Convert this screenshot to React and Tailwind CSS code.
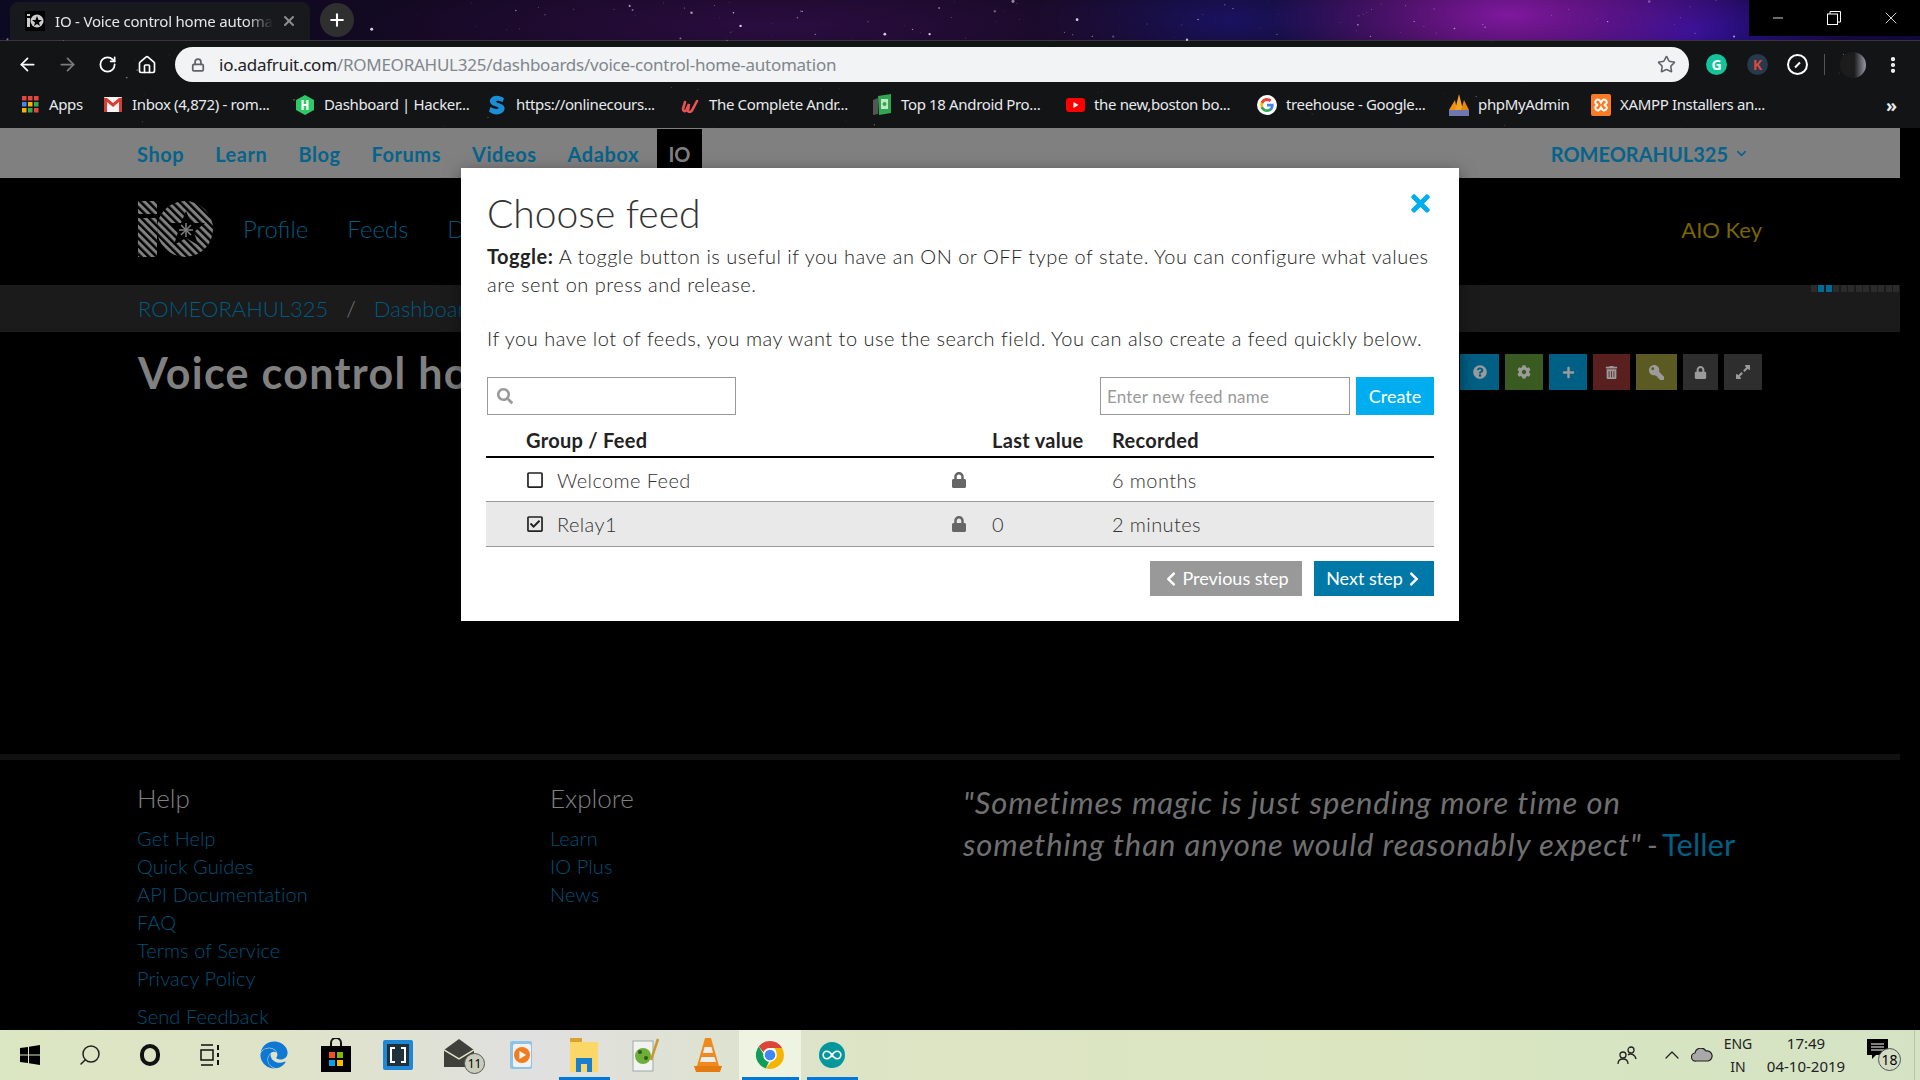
import { ArrowLeft, ArrowRight, RotateCw, Home, Star, Lock, ChevronDown, Plus, X, Minus, MoreVertical, Search, ChevronUp } from 'lucide-react';
import {
  FaTimes, FaSearch, FaRegSquare, FaRegCheckSquare, FaLock, FaChevronLeft, FaChevronRight,
  FaQuestionCircle, FaCog, FaPlus, FaTrashAlt, FaKey, FaExpandAlt, FaEdge,
} from 'react-icons/fa';

const SANS = "font-['Lato','Liberation_Sans',sans-serif]";
const UI = "font-['Noto_Sans','Liberation_Sans',sans-serif]";

// deterministic star field for the wallpaper
const makeStars = (count, w, h, seed) => {
  let s = seed;
  const rnd = () => {
    s = (s * 16807) % 2147483647;
    return s / 2147483647;
  };
  return Array.from({ length: count }, () => ({ x: rnd() * w, y: rnd() * h, r: 0.3 + rnd() * rnd() * 1.5, o: 0.2 + rnd() * 0.7 }));
};
const TOP_STARS = makeStars(120, 1750, 41, 4711);
const BAR_STARS = makeStars(90, 1920, 87, 9133);

const Stars = ({ stars, w, h, fill }) => (
  <svg className="absolute inset-0" width={w} height={h}>
    {stars.map((p, i) => (
      <circle key={i} cx={p.x} cy={p.y} r={p.r} fill={fill} opacity={p.o} />
    ))}
  </svg>
);

const IoLogo = () => (
  <svg width="75" height="56" viewBox="0 0 75 56">
    <defs>
      <pattern id="hatch" width="5.500" height="5.500" patternUnits="userSpaceOnUse" patternTransform="rotate(45)">
        <rect width="5.500" height="3" fill="#808080" />
      </pattern>
    </defs>
    <rect x="0" y="0" width="19" height="13" fill="url(#hatch)" />
    <rect x="0" y="17" width="19" height="39" fill="url(#hatch)" />
    <circle cx="47" cy="28" r="28" fill="url(#hatch)" />
    <polygon points="48,10 53,22 67,22 56,31 60,44 48,37 36,44 40,31 30,22 43,22" fill="#000" />
    <g stroke="#808080" strokeWidth="1.500">
      <line x1="48" y1="22" x2="48" y2="36" />
      <line x1="41" y1="29" x2="55" y2="29" />
      <line x1="43" y1="24" x2="53" y2="34" />
      <line x1="53" y1="24" x2="43" y2="34" />
    </g>
  </svg>
);

const Favicon = () => (
  <svg width="20" height="20" viewBox="0 0 20 20">
    <rect width="20" height="20" fill="#000" />
    <rect x="2" y="3" width="3" height="2" fill="#ccc" />
    <rect x="2" y="7" width="3" height="9" fill="#ccc" />
    <circle cx="12" cy="10" r="6.500" fill="#ccc" />
    <polygon points="12,5 13.500,9 17,9 14,11.500 15,15 12,13 9,15 10,11.500 7,9 10.500,9" fill="#000" />
  </svg>
);

const GoogleG = ({ size = 20 }) => (
  <svg width={size} height={size} viewBox="0 0 24 24">
    <circle cx="12" cy="12" r="12" fill="#fff" />
    <path d="M20 12.200c0-.6-.1-1.100-.2-1.600H12v3.100h4.500c-.2 1-.8 1.900-1.700 2.500v2h2.700c1.600-1.400 2.500-3.500 2.500-6z" fill="#4285f4" />
    <path d="M12 20.300c2.200 0 4.100-.7 5.500-2l-2.700-2c-.8.500-1.700.8-2.800.8-2.100 0-3.900-1.400-4.600-3.400H4.600v2.100c1.400 2.700 4.200 4.500 7.400 4.500z" fill="#34a853" />
    <path d="M7.400 13.700c-.3-1-.3-2.100 0-3.100V8.500H4.600c-1 1.900-1 4.400 0 6.300z" fill="#fbbc05" />
    <path d="M12 7.100c1.200 0 2.300.4 3.100 1.200l2.400-2.400C16.100 4.600 14.200 3.700 12 3.700c-3.200 0-6 1.800-7.400 4.800l2.800 2.100c.7-2 2.500-3.500 4.600-3.500z" fill="#ea4335" />
  </svg>
);

const BOOKMARKS = [
  { label: 'Apps', w: 'w-[83px]', icon: (
    <svg width="17" height="17" viewBox="0 0 17 17">
      {[0, 6, 12].map((y, r) => [0, 6, 12].map((x, c) => (
        <rect key={`${r}${c}`} x={x} y={y} width="4.500" height="4.500" fill={[['#e8453c', '#e8453c', '#e8453c'], ['#4285f4', '#f4b400', '#34a853'], ['#f4b400', '#34a853', '#e8453c']][r][c]} />
      )))}
    </svg>
  ) },
  { label: 'Inbox (4,872) - rom...', w: 'w-[192px]', icon: (
    <svg width="18" height="15" viewBox="0 0 18 15">
      <rect width="18" height="15" rx="1" fill="#f5f5f5" />
      <path d="M0 1h3l6 5 6-5h3v14h-3V5L9 10 3 5v10H0z" fill="#d93c30" />
    </svg>
  ) },
  { label: 'Dashboard | Hacker...', w: 'w-[192px]', icon: (
    <svg width="18" height="20" viewBox="0 0 18 20">
      <polygon points="9,0 18,5 18,15 9,20 0,15 0,5" fill="#2ec866" />
      <path d="M5.500 5h2.200v4h2.600V5h2.200v10h-2.200v-4H7.700v4H5.500z" fill="#fff" />
    </svg>
  ) },
  { label: 'https://onlinecours...', w: 'w-[193px]', icon: (
    <svg width="16" height="20" viewBox="0 0 16 20">
      <path d="M15 3.500C13 1.500 9.500.5 6 1 2.500 1.700.5 4 1 7c.4 2.500 3 3.500 5.500 4.300 1.700.5 3 1 3 1.800 0 1.500-4.500 1.200-8-1L0 16.500C3 19 7 20 10.500 19c3.500-1 5.500-3.500 5-6.500-.5-2.500-3-3.500-5.500-4.300-1.500-.5-3-1-2.900-1.800.2-1.200 4-.8 6.400.8z" fill="#1a8fd6" />
    </svg>
  ) },
  { label: 'The Complete Andr...', w: 'w-[192px]', icon: (
    <svg width="18" height="16" viewBox="0 0 18 16">
      <path d="M4 5 2 12c0 2 2 3 3.500 1L8 7l-1 6c0 2.500 2.500 2.500 4 .5L16 4" fill="none" stroke="#ec5252" strokeWidth="2.600" strokeLinecap="round" />
    </svg>
  ) },
  { label: 'Top 18 Android Pro...', w: 'w-[193px]', icon: (
    <svg width="20" height="22" viewBox="0 0 20 22">
      <polygon points="1,6 6,4 6,20 1,21" fill="#555" />
      <polygon points="6,2 19,0 19,19 7,21" fill="#2fa84f" />
      <rect x="9" y="5" width="7" height="10" fill="#bfe8c8" />
      <circle cx="12.500" cy="10" r="2" fill="#2fa84f" />
    </svg>
  ) },
  { label: 'the new,boston bo...', w: 'w-[192px]', icon: (
    <svg width="19" height="14" viewBox="0 0 19 14">
      <rect width="19" height="14" rx="3" fill="#f00" />
      <polygon points="7.500,4 12.500,7 7.500,10" fill="#fff" />
    </svg>
  ) },
  { label: 'treehouse - Google...', w: 'w-[192px]', icon: <GoogleG /> },
  { label: 'phpMyAdmin', w: 'w-[142px]', icon: (
    <svg width="20" height="22" viewBox="0 0 20 22">
      <polygon points="0,16 6,6 8,16" fill="#f29111" />
      <polygon points="6,16 10,0 14,16" fill="#f5a623" />
      <polygon points="12,16 15,6 20,16" fill="#e8860c" />
      <rect x="0" y="16" width="20" height="6" fill="#6c78af" />
    </svg>
  ) },
  { label: 'XAMPP Installers an...', w: 'w-[265px]', icon: (
    <svg width="20" height="22" viewBox="0 0 20 22">
      <rect width="20" height="22" rx="2" fill="#fb7a24" />
      <path d="M5 6.500c2-2 3.500-1 5 2 1.500-3 3-4 5-2 2 2 0 4-2 4.500 2 .5 4 2.500 2 4.500s-3.500 1-5-2c-1.500 3-3 4-5 2s0-4 2-4.500c-2-.5-4-2.500-2-4.500z" fill="none" stroke="#fff" strokeWidth="2" />
    </svg>
  ) },
];

const NAV = ['Shop', 'Learn', 'Blog', 'Forums', 'Videos', 'Adabox'];
const HELP = ['Get Help', 'Quick Guides', 'API Documentation', 'FAQ', 'Terms of Service', 'Privacy Policy'];
const EXPLORE = ['Learn', 'IO Plus', 'News'];

const ACTIONS = [
  { Icon: FaQuestionCircle, cls: 'w-[39px] bg-[#005f85]', size: 14 },
  { Icon: FaCog, cls: 'w-[38px] bg-[#395a20]', size: 14 },
  { Icon: FaPlus, cls: 'w-[38px] bg-[#005f85]', size: 13 },
  { Icon: FaTrashAlt, cls: 'w-[37px] bg-[#5a1f1f]', size: 13 },
  { Icon: FaKey, cls: 'w-[41px] bg-[#5a5a22] [&>svg]:-scale-x-100', size: 15 },
  { Icon: FaLock, cls: 'w-[35px] bg-[#2e2e2e]', size: 13 },
  { Icon: FaExpandAlt, cls: 'w-[38px] bg-[#2e2e2e]', size: 16 },
];

const FEEDS = [
  { name: 'Welcome Feed', value: '', recorded: '6 months', checked: false },
  { name: 'Relay1', value: '0', recorded: '2 minutes', checked: true },
];

const ChromeLogo = () => (
  <svg width="30" height="30" viewBox="0 0 30 30">
    <path d="M15 1a14 14 0 0 1 12.100 7H15a7 7 0 0 0-6.500 4.300L3.800 6.500A14 14 0 0 1 15 1z" fill="#db4437" />
    <path d="M3.800 6.500 9 15a6 6 0 0 0 5 6.800L10.800 28.400A14 14 0 0 1 3.800 6.500z" fill="#0f9d58" />
    <path d="M27.100 8A14 14 0 0 1 15 29l-4.200-.6 5.700-7.200A7 7 0 0 0 21 15a7 7 0 0 0-1.500-7z" fill="#f4b400" />
    <circle cx="15" cy="15" r="6.800" fill="#fff" />
    <circle cx="15" cy="15" r="5.300" fill="#4285f4" />
  </svg>
);

const TASK_ICONS = [
  { key: 'edge', node: <FaEdge size={28} color="#0f78d4" /> },
  { key: 'store', node: (
    <svg width="30" height="34" viewBox="0 0 30 34">
      <path d="M10 8V5a5 5 0 0 1 10 0v3" fill="none" stroke="#111" strokeWidth="2" />
      <rect y="8" width="30" height="26" fill="#000" />
      <rect x="8" y="14" width="6" height="6" fill="#f25022" />
      <rect x="16" y="14" width="6" height="6" fill="#7fba00" />
      <rect x="8" y="22" width="6" height="6" fill="#00a4ef" />
      <rect x="16" y="22" width="6" height="6" fill="#ffb900" />
    </svg>
  ) },
  { key: 'brackets', node: (
    <svg width="30" height="30" viewBox="0 0 30 30">
      <rect width="30" height="30" rx="2" fill="#1e88d6" />
      <rect x="4" y="4" width="22" height="22" fill="#20303c" />
      <path d="M12 8H8v14h4M18 8h4v14h-4" fill="none" stroke="#fff" strokeWidth="2" />
    </svg>
  ) },
  { key: 'mail', node: (
    <div className="relative h-[32px] w-[32px]">
      <svg width="30" height="28" viewBox="0 0 30 28">
        <path d="M0 11 15 0l15 11v17H0z" fill="#3f403c" />
        <path d="M0 11l15 9 15-9" fill="none" stroke="#dfe6c8" strokeWidth="1.500" />
      </svg>
      <span className={`absolute left-[20px] top-[14px] flex h-[21px] w-[21px] items-center justify-center rounded-full border border-[#555] bg-[#c9cdbb] text-[12px] text-black ${UI}`}>11</span>
    </div>
  ) },
  { key: 'media', node: (
    <svg width="26" height="30" viewBox="0 0 26 30">
      <rect x="1" y="1" width="22" height="28" rx="2" fill="#8cc4e8" />
      <rect x="4" y="4" width="18" height="23" rx="2" fill="#f1f1f1" />
      <circle cx="13" cy="15" r="8" fill="#f07d1f" />
      <polygon points="10.500,11 17,15 10.500,19" fill="#fff" />
    </svg>
  ) },
  { key: 'explorer', node: (
    <svg width="28" height="34" viewBox="0 0 28 34">
      <rect x="0" y="0" width="12" height="6" fill="#d9a12f" />
      <rect x="0" y="4" width="28" height="30" fill="#fbd767" />
      <path d="M6 34V20h16v14h-5v-8h-6v8z" fill="#1b7fd0" />
    </svg>
  ) },
  { key: 'notepad', node: (
    <svg width="28" height="34" viewBox="0 0 28 34">
      <rect x="1" y="3" width="20" height="30" fill="#f2f2f2" stroke="#9aa" />
      <circle cx="11" cy="18" r="8" fill="#6fae3a" />
      <circle cx="8" cy="14" r="2" fill="#2e5d18" />
      <circle cx="14" cy="20" r="2" fill="#2e5d18" />
      <line x1="26" y1="1" x2="19" y2="22" stroke="#c79a2c" strokeWidth="2.500" />
    </svg>
  ) },
  { key: 'vlc', node: (
    <svg width="28" height="34" viewBox="0 0 28 34">
      <polygon points="14,0 17,0 25,28 3,28 11,0" fill="#f08a1c" />
      <polygon points="10.500,9 17.500,9 19,15 9,15" fill="#eee" />
      <polygon points="7.500,19 20.500,19 22,24 6,24" fill="#eee" />
      <polygon points="0,28 28,28 26,34 2,34" fill="#e57a10" />
    </svg>
  ) },
  { key: 'chrome', node: <ChromeLogo />, active: true, bar: 'w-[57px]' },
  { key: 'arduino', node: (
    <svg width="26" height="26" viewBox="0 0 28 28">
      <circle cx="14" cy="14" r="14" fill="#00979c" />
      <path d="M14 14c-2-3-3.500-4-5.500-4a4 4 0 0 0 0 8c2 0 3.500-1 5.500-4zm0 0c2-3 3.500-4 5.500-4a4 4 0 0 1 0 8c-2 0-3.500-1-5.500-4z" fill="none" stroke="#fff" strokeWidth="1.800" />
    </svg>
  ), bar: 'w-[51px]' },
];

function BrowserChrome() {
  return (
    <div className={`relative h-[128px] shrink-0 overflow-hidden bg-[#121416] ${UI}`}>
      <Stars stars={BAR_STARS.map((p) => ({ ...p, y: p.y + 41, r: p.r * 0.6, o: p.o * 0.6 }))} w={1920} h={128} fill="#cfd6e0" />
      {/* wallpaper strip with tabs */}
      <div className="relative flex h-[41px] items-end border-b border-[#3a3540] bg-[radial-gradient(ellipse_240px_80px_at_1510px_15px,#7f189e,transparent),radial-gradient(ellipse_160px_60px_at_1690px_30px,#2a1096,transparent),radial-gradient(ellipse_420px_60px_at_780px_25px,#2a0d40,transparent),radial-gradient(ellipse_200px_60px_at_1230px_20px,#1a1260,transparent),linear-gradient(90deg,#0c0a22,#190822_40%,#100a1e_65%,#22083e_85%,#10083a)]">
        <Stars stars={TOP_STARS} w={1750} h={41} fill="#f2e6ff" />
        <div className="relative ml-[10px] flex h-[38px] w-[300px] items-center rounded-t-[8px] bg-[#17191c] pl-[15px] text-[15px] tracking-[-0.2px] text-[#e6e6e6]">
          <Favicon />
          <span className="ml-[10px] w-[218px] overflow-hidden whitespace-nowrap [mask-image:linear-gradient(90deg,#000_88%,transparent)]">IO - Voice control home automation</span>
          <X size={16} strokeWidth={3} className="ml-[8px] text-[#8d8d8d]" />
        </div>
        <div className="relative mb-[3px] ml-[10px] flex h-[34px] w-[34px] items-center justify-center rounded-full bg-[#2f2f2f]">
          <Plus size={20} strokeWidth={2.500} className="text-white" />
        </div>
        <div className="absolute right-0 top-0 flex h-[36px] w-[171px] items-center bg-black text-white">
          <span className="flex w-[57px] justify-center"><Minus size={16} strokeWidth={1.250} /></span>
          <span className="flex w-[56px] justify-center">
            <svg width="14" height="14" viewBox="0 0 14 14" fill="none" stroke="#fff"><rect x="0.500" y="3" width="10" height="10.500" /><path d="M3 3V.5h10.500V11H11" /></svg>
          </span>
          <span className="flex w-[58px] justify-center"><X size={20} strokeWidth={1} /></span>
        </div>
      </div>
      {/* toolbar */}
      <div className="relative flex h-[41px] items-center pt-[6px] pl-[7px] text-white">
        <span className="flex w-[40px] justify-center"><ArrowLeft size={21} strokeWidth={2} /></span>
        <span className="flex w-[40px] justify-center text-[#7b7b7b]"><ArrowRight size={21} strokeWidth={2} /></span>
        <span className="flex w-[40px] justify-center"><RotateCw size={19} strokeWidth={2.250} /></span>
        <span className="flex w-[40px] justify-center"><Home size={20} strokeWidth={2} /></span>
        <div className="ml-[8px] flex h-[35px] w-[1514px] items-center rounded-full bg-[#f1f3f4] pl-[16px] pr-[13px]">
          <Lock size={14} strokeWidth={3} className="text-[#5f6368]" />
          <span className="ml-[14px] text-[17px] tracking-[-0.25px] text-[#80868b]">
            <span className="text-[#202124]">io.adafruit.com</span>/ROMEORAHUL325/dashboards/voice-control-home-automation
          </span>
          <Star size={19} strokeWidth={2} className="ml-auto text-[#5f6368]" />
        </div>
        <span className="ml-[17px] flex h-[21px] w-[21px] items-center justify-center rounded-full bg-[#15c39a] text-[14px] font-bold">G</span>
        <span className="ml-[20px] flex h-[21px] w-[21px] items-center justify-center rounded-full bg-[#26394d] text-[14px] font-bold text-[#d9493f]">K</span>
        <span className="relative ml-[19px] flex h-[21px] w-[21px] items-center justify-center rounded-full border-2 border-white bg-[#121416]">
          <span className="h-[2px] w-[7px] -rotate-45 bg-white" />
        </span>
        <span className="ml-[16px] h-[21px] w-px bg-[#555]" />
        <span className="ml-[15px] h-[26px] w-[26px] rounded-full bg-[linear-gradient(90deg,#1c1c1c_55%,#9a9aa8)]" />
        <MoreVertical size={20} strokeWidth={3} className="ml-[17px]" />
      </div>
      {/* bookmarks */}
      <div className="relative flex h-[46px] items-center pl-[20px] pb-[1px] text-[15px] tracking-[-0.35px] text-[#e8eaed]">
        {BOOKMARKS.map((b) => (
          <div key={b.label} className={`flex items-center ${b.w}`}>
            <span className="flex w-[20px] shrink-0 justify-center">{b.icon}</span>
            <span className="ml-[9px] whitespace-nowrap">{b.label}</span>
          </div>
        ))}
        <span className="ml-[30px] text-[18px] font-bold leading-none">»</span>
      </div>
    </div>
  );
}

function Page() {
  return (
    <div className={`flex h-[902px] w-[1900px] shrink-0 flex-col overflow-hidden ${SANS}`}>
      {/* site nav */}
      <div className="flex h-[50px] shrink-0 items-center bg-[#808080] pl-[137px] pr-[151px] pt-[1px] text-[20px] font-bold text-[#06638a]">
        {NAV.map((item) => (
          <span key={item} className="mr-[31px] tracking-[0.55px]">{item}</span>
        ))}
        <span className="-ml-[13px] flex h-full w-[45px] items-center justify-center bg-black text-[#808080]">IO</span>
        <span className="ml-auto flex items-center gap-[6px]">ROMEORAHUL325 <ChevronDown size={15} strokeWidth={2.500} /></span>
      </div>
      {/* io header */}
      <div className="flex h-[107px] shrink-0 items-center px-[138px] pb-[5px] text-[24px] font-light text-[#005a7f]">
        <IoLogo />
        <span className="ml-[30px]">Profile</span>
        <span className="ml-[39px]">Feeds</span>
        <span className="ml-[39px]">Dashboards</span>
        <span className="ml-auto text-[22px] font-normal text-[#7a6500]">AIO Key</span>
      </div>
      {/* breadcrumbs */}
      <div className="relative flex h-[47px] shrink-0 items-center bg-[#1b1b1b] pl-[138px] text-[22px] font-light text-[#005a7f]">
        <span>ROMEORAHUL325</span>
        <span className="mx-[18px] text-[#808080]">/</span>
        <span>Dashboards</span>
        <div className="absolute right-[1px] top-0 flex h-[7px] gap-[1.500px]">
          {Array.from({ length: 12 }, (_, i) => (
            <span key={i} className={i === 1 || i === 2 ? 'h-[7px] w-[6px] bg-[#006a94]' : 'h-[7px] w-[6px] bg-[#2b2b2b]'} />
          ))}
        </div>
      </div>
      {/* title row */}
      <div className="mt-[22px] flex h-[36px] shrink-0 items-center justify-between px-[138px]">
        <h1 className="whitespace-nowrap pt-[2px] text-[43px] font-bold tracking-[1.3px] text-[#808080]">Voice control home automation</h1>
        <div className="flex h-full gap-[6px]">
          {ACTIONS.map(({ Icon, cls, size }, i) => (
            <span key={i} className={`flex items-center justify-center text-[#9b9b9b] ${cls}`}>
              <Icon size={size} />
            </span>
          ))}
        </div>
      </div>
      {/* footer */}
      <div className="mt-[364px] h-[6px] w-full shrink-0 bg-[#111]" />
      <div className="flex pl-[137px] pt-[21px]">
        <div className="w-[413px]">
          <h4 className="text-[26px] font-light leading-[34px] text-[#808080]">Help</h4>
          <ul className="mt-[9px] text-[20px] font-light leading-[28px] tracking-[0.1px] text-[#005079]">
            {HELP.map((l) => <li key={l}>{l}</li>)}
            <li className="mt-[10px]">Send Feedback</li>
          </ul>
        </div>
        <div className="w-[413px]">
          <h4 className="text-[26px] font-light leading-[34px] text-[#808080]">Explore</h4>
          <ul className="mt-[9px] text-[20px] font-light leading-[28px] tracking-[0.1px] text-[#005079]">
            {EXPLORE.map((l) => <li key={l}>{l}</li>)}
          </ul>
        </div>
        <p className="w-[800px] text-[31px] italic leading-[42px] tracking-[0.93px] text-[#707070]">
          "Sometimes magic is just spending more time on<br />
          something than anyone would reasonably expect" <span className="-ml-[3px]">-</span> <span className="-ml-[5px] not-italic tracking-normal text-[#005f85]">Teller</span>
        </p>
      </div>
    </div>
  );
}

function Modal() {
  return (
    <div className={`absolute left-[461px] top-[168px] h-[453px] w-[998px] bg-white px-[25px] pt-[18px] text-[#222] shadow-[0_5px_15px_rgba(0,0,0,0.5)] ${SANS}`}>
      <FaTimes size={27} className="absolute right-[25px] top-[22px] text-[#00aeef]" />
      <h2 className="ml-[1px] h-[54px] text-[39px] font-light leading-[54px] text-[#333]">Choose feed</h2>
      <p className="ml-[1px] mt-[2px] text-[20px] font-light leading-[28px] tracking-[0.5px] text-[#222]">
        <b className="font-bold">Toggle:</b> A toggle button is useful if you have an ON or OFF type of state. You can configure what values are sent on press and release.
      </p>
      <p className="ml-[1px] mt-[26px] text-[20px] font-light leading-[28px] tracking-[0.5px] text-[#222]">
        If you have lot of feeds, you may want to use the search field. You can also create a feed quickly below.
      </p>
      <div className="mt-[25px] flex h-[38px] items-center">
        <div className="ml-[1px] flex h-full w-[249px] items-center border border-[#999] pl-[9px]">
          <FaSearch size={16} className="text-[#999]" />
        </div>
        <div className="ml-auto flex h-full w-[250px] items-center border border-[#999] pl-[6px] pt-[1px] text-[17px] tracking-[0.2px] text-[#999]">Enter new feed name</div>
        <button type="button" className="ml-[6px] h-full w-[78px] bg-[#00aeef] text-[18px] text-white">Create</button>
      </div>
      <div className="flex h-[41px] pl-[40px] pt-[12px] text-[20px] font-bold leading-[26px] tracking-[0.3px] text-[#222]">
        <span className="w-[466px]">Group / Feed</span>
        <span className="w-[120px]">Last value</span>
        <span>Recorded</span>
      </div>
      <div className="border-t-2 border-black text-[20px] font-light tracking-[0.4px] text-[#333]">
        {FEEDS.map((f) => (
          <div key={f.name} className={`grid grid-cols-[71px_394px_41px_120px_1fr] items-center border-b border-[#999] ${f.checked ? 'h-[45px] bg-[#e9e9e9]' : 'h-[44px]'}`}>
            <span className="pl-[40px]">
              {f.checked ? <FaRegCheckSquare size={18} className="text-[#222]" /> : <FaRegSquare size={18} className="text-[#222]" />}
            </span>
            <span>{f.name}</span>
            <FaLock size={16} className="text-[#666]" />
            <span>{f.value}</span>
            <span>{f.recorded}</span>
          </div>
        ))}
      </div>
      <div className="mt-[14px] flex h-[35px] justify-end gap-[12px] text-[18px] text-white">
        <button type="button" className="flex w-[152px] items-center justify-center gap-[3px] bg-[#999]"><FaChevronLeft size={16} />Previous step</button>
        <button type="button" className="flex w-[120px] items-center justify-center gap-[3px] bg-[#0079a8]">Next step<FaChevronRight size={16} /></button>
      </div>
    </div>
  );
}

function Taskbar() {
  return (
    <div className={`flex h-[50px] shrink-0 items-center bg-[linear-gradient(90deg,#dbe6c2,#dfe3c8_15%,#e0e0e0_28%,#dde4c5_45%,#dbe6c0_70%,#d4e3c4)] text-[#222] ${UI}`}>
      <span className="flex w-[60px] justify-center">
        <svg width="20" height="20" viewBox="0 0 20 20" fill="#000"><path d="M0 3l8-1v7.500H0zM9 1.800 20 0v9.500H9zM0 10.500h8V18l-8-1zM9 10.500h11V20L9 18.300z" /></svg>
      </span>
      <span className="flex w-[60px] justify-center"><Search size={24} strokeWidth={1.500} className="-scale-x-100" /></span>
      <span className="flex w-[60px] justify-center"><span className="h-[22px] w-[20px] rounded-full border-[4px] border-[#111]" /></span>
      <span className="flex w-[60px] justify-center">
        <svg width="20" height="22" viewBox="0 0 20 22" fill="none" stroke="#111" strokeWidth="1.500"><path d="M1 1h12M1 21h12" /><rect x="1" y="6" width="12" height="10" /><path d="M18 1v5M18 9v4M18 16v5" strokeWidth="2" /></svg>
      </span>
      <div className="ml-[3px] flex h-full">
        {TASK_ICONS.map((t) => (
          <span key={t.key} className={`relative flex w-[62px] items-center justify-center ${t.active ? 'bg-[#eff4e2]' : ''}`}>
            {t.node}
            {(t.key === 'explorer' || t.bar) && (
              <span className={`absolute bottom-0 h-[3px] bg-[#0078d7] ${t.bar || 'w-[51px]'}`} />
            )}
          </span>
        ))}
      </div>
      <div className="ml-auto flex h-full items-center pr-[5px]">
        <svg width="20" height="20" viewBox="0 0 20 20" fill="none" stroke="#222" strokeWidth="1.300">
          <circle cx="6" cy="10" r="3" /><path d="M1 19c0-3 2-5 5-5s5 2 5 5" />
          <circle cx="14" cy="5" r="3" /><path d="M11 10c2-2 7-1 8 4" />
        </svg>
        <ChevronUp size={24} strokeWidth={1.250} className="ml-[23px]" />
        <svg className="ml-[7px]" width="22" height="14" viewBox="0 0 22 14">
          <path d="M5 13a4 4 0 0 1-1-8 6 6 0 0 1 11-2 5 5 0 0 1 2 10z" fill="#a9a9a9" stroke="#222" strokeWidth="1.200" />
        </svg>
        <div className="ml-[10px] w-[30px] text-center text-[14px] leading-[23px]">ENG<br />IN</div>
        <div className="ml-[8px] w-[90px] text-center text-[15px] leading-[23px]">17:49<br />04-10-2019</div>
        <div className="relative ml-[10px] mr-[25px] h-[32px] w-[28px]">
          <svg className="absolute left-[6px] top-[0px]" width="21" height="20" viewBox="0 0 21 20">
            <path d="M0 0h21v16H9l-4 4v-4H0z" fill="#000" />
            <path d="M4 5h13M4 8h13M4 11h13" stroke="#fff" />
          </svg>
          <span className="absolute left-[17px] top-[9px] flex h-[23px] w-[23px] items-center justify-center rounded-full border border-[#555] bg-[#d2dcc2] text-[14px] text-black">18</span>
        </div>
        <span className="h-full w-px bg-[#b9c4ab]" />
      </div>
    </div>
  );
}

export default function App() {
  return (
    <div className="relative flex h-[1080px] w-[1920px] flex-col overflow-hidden bg-black">
      <BrowserChrome />
      <Page />
      <Taskbar />
      <Modal />
    </div>
  );
}
